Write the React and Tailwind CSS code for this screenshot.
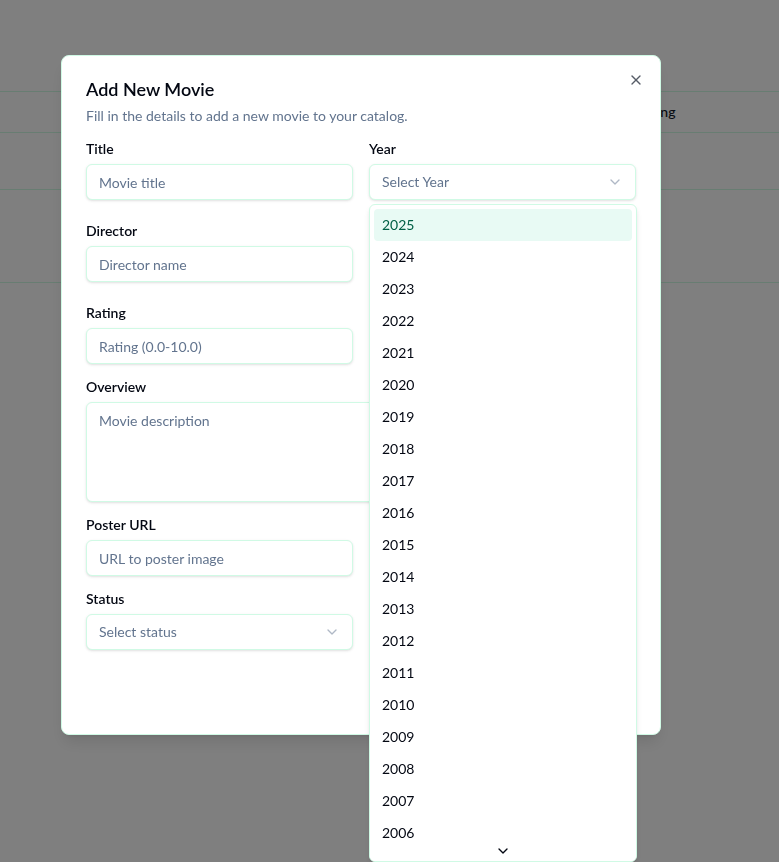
import { X, ChevronDown } from 'lucide-react'

const YEARS = Array.from({ length: 20 }, (_, i) => String(2025 - i))

function Field({ label, children }) {
  return (
    <div>
      <label className="block text-sm font-semibold leading-none text-gray-950">{label}</label>
      <div className="mt-2">{children}</div>
    </div>
  )
}

function TextInput({ placeholder }) {
  return (
    <input
      placeholder={placeholder}
      className="h-9 w-full rounded-md border border-emerald-100 bg-white px-3 text-sm text-gray-900 shadow-sm outline-none placeholder:text-slate-500"
    />
  )
}

function SelectTrigger({ placeholder }) {
  return (
    <button
      type="button"
      className="flex h-9 w-full items-center justify-between rounded-md border border-emerald-100 bg-white px-3 text-sm text-slate-500 shadow-sm"
    >
      <span>{placeholder}</span>
      <ChevronDown className="h-4 w-4 opacity-50" />
    </button>
  )
}

export default function App() {
  return (
    <div className="relative min-h-screen bg-white font-['Lato',sans-serif]">
      <div className="h-[91px]" />
      <div className="border-t border-emerald-100">
        <div className="grid h-[41px] grid-cols-[620px_1fr] items-center border-b border-emerald-100 text-sm font-medium text-gray-900">
          <div />
          <div className="px-4">Rating</div>
        </div>
        <div className="h-[57px] border-b border-emerald-100" />
        <div className="h-[93px] border-b border-emerald-100" />
      </div>

      <div className="fixed inset-0 bg-black/50">
        <div className="relative ml-[61px] mt-[55px] w-[600px] rounded-lg border border-emerald-100 bg-white p-6 shadow-lg">
          <button type="button" className="absolute right-4 top-4 text-gray-900 opacity-70">
            <X className="h-4 w-4" />
          </button>

          <h2 className="text-lg font-semibold leading-none text-gray-950">Add New Movie</h2>
          <p className="mt-2 text-sm leading-5 text-slate-500">
            Fill in the details to add a new movie to your catalog.
          </p>

          <form className="mt-4">
            <div className="grid grid-cols-2 gap-4">
              <Field label="Title">
                <TextInput placeholder="Movie title" />
              </Field>
              <Field label="Year">
                <div className="relative">
                  <SelectTrigger placeholder="Select Year" />
                  <div className="absolute left-0 top-[calc(100%+4px)] z-10 h-[658px] w-[268px] overflow-hidden rounded-md border border-emerald-100 bg-white p-1 shadow-md">
                    {YEARS.map((y, i) => (
                      <div
                        key={y}
                        className={`rounded-sm px-2 py-1.5 text-sm leading-5 ${
                          i === 0 ? 'bg-[#e8faf4] text-emerald-800' : 'text-gray-950'
                        }`}
                      >
                        {y}
                      </div>
                    ))}
                    <div className="absolute inset-x-0 bottom-0 flex h-[18px] items-start justify-center bg-white">
                      <ChevronDown className="h-4 w-4 text-gray-950" />
                    </div>
                  </div>
                </div>
              </Field>
            </div>

            <div className="mt-6 grid grid-cols-2 gap-4">
              <Field label="Director">
                <TextInput placeholder="Director name" />
              </Field>
              <div />
            </div>

            <div className="mt-6 grid grid-cols-2 gap-4">
              <Field label="Rating">
                <TextInput placeholder="Rating (0.0-10.0)" />
              </Field>
              <div />
            </div>

            <div className="mt-4">
              <Field label="Overview">
                <textarea
                  placeholder="Movie description"
                  className="block h-[100px] w-full resize-none rounded-md border border-emerald-100 bg-white px-3 py-2 text-sm text-gray-900 shadow-sm outline-none placeholder:text-slate-500"
                />
              </Field>
            </div>

            <div className="mt-4 grid grid-cols-2 gap-4">
              <Field label="Poster URL">
                <TextInput placeholder="URL to poster image" />
              </Field>
              <div />
            </div>

            <div className="mt-4 grid grid-cols-2 gap-4">
              <Field label="Status">
                <SelectTrigger placeholder="Select status" />
              </Field>
              <div />
            </div>

            <div className="mt-6 h-9" />
          </form>
        </div>
      </div>
    </div>
  )
}
